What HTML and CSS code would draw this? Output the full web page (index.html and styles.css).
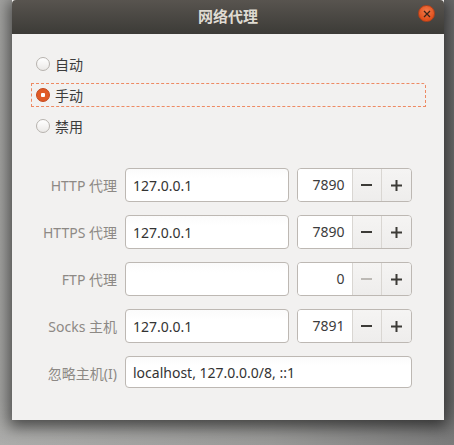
FILE: index.html
```html
<!DOCTYPE html>
<html lang="zh-CN">
<head>
  <meta charset="UTF-8" />
  <title>网络代理</title>
  <link rel="stylesheet" href="styles.css">
</head>
<body>

  <div class="desktop">
    <div class="dialog">
      <div class="titlebar">
        <span class="title">网络代理</span>
        <button class="close" aria-label="关闭">
          <svg width="8" height="8" viewBox="0 0 8 8"><path d="M1 1L7 7M7 1L1 7" stroke="#3a2418" stroke-width="1.3"/></svg>
        </button>
      </div>

      <div class="content">
        <div class="modes">
          <label class="mode"><span class="radio"></span>自动</label>
          <label class="mode focused"><span class="radio checked"></span>手动</label>
          <label class="mode"><span class="radio"></span>禁用</label>
        </div>

        <div class="proxy-grid">
          <span class="field-label">HTTP 代理</span>
          <input class="entry" type="text" value="127.0.0.1" />
          <div class="spin">
            <span class="spin-value">7890</span>
            <span class="spin-btn"><svg width="11" height="2"><rect width="11" height="2" fill="#3c3b37"/></svg></span>
            <span class="spin-btn"><svg width="11" height="11"><rect y="4.5" width="11" height="2" fill="#3c3b37"/><rect x="4.5" width="2" height="11" fill="#3c3b37"/></svg></span>
          </div>

          <span class="field-label">HTTPS 代理</span>
          <input class="entry" type="text" value="127.0.0.1" />
          <div class="spin">
            <span class="spin-value">7890</span>
            <span class="spin-btn"><svg width="11" height="2"><rect width="11" height="2" fill="#3c3b37"/></svg></span>
            <span class="spin-btn"><svg width="11" height="11"><rect y="4.5" width="11" height="2" fill="#3c3b37"/><rect x="4.5" width="2" height="11" fill="#3c3b37"/></svg></span>
          </div>

          <span class="field-label">FTP 代理</span>
          <input class="entry" type="text" value="" />
          <div class="spin">
            <span class="spin-value">0</span>
            <span class="spin-btn"><svg width="11" height="2"><rect width="11" height="2" fill="#bcb9b5"/></svg></span>
            <span class="spin-btn"><svg width="11" height="11"><rect y="4.5" width="11" height="2" fill="#3c3b37"/><rect x="4.5" width="2" height="11" fill="#3c3b37"/></svg></span>
          </div>

          <span class="field-label">Socks 主机</span>
          <input class="entry" type="text" value="127.0.0.1" />
          <div class="spin">
            <span class="spin-value">7891</span>
            <span class="spin-btn"><svg width="11" height="2"><rect width="11" height="2" fill="#3c3b37"/></svg></span>
            <span class="spin-btn"><svg width="11" height="11"><rect y="4.5" width="11" height="2" fill="#3c3b37"/><rect x="4.5" width="2" height="11" fill="#3c3b37"/></svg></span>
          </div>

          <span class="field-label">忽略主机(I)</span>
          <input class="entry entry-wide" type="text" value="localhost, 127.0.0.0/8, ::1" />
        </div>
      </div>
    </div>
  </div>

</body>
</html>
```

FILE: styles.css
```css
* {
  box-sizing: border-box;
}

html, body {
  margin: 0;
  height: 100%;
}

body {
  font-family: 'Noto Sans', 'Noto Sans CJK SC', sans-serif;
  font-size: 14px;
  background: linear-gradient(90deg, #a2a2a0 0%, #8c8c8a 60%, #6a6a6a 100%);
  overflow: hidden;
}

.desktop {
  height: 100%;
  padding-left: 12px;
  background: linear-gradient(180deg, rgba(0,0,0,0) 90%, rgba(255,255,255,0.12) 100%);
}

.dialog {
  width: 432px;
  height: 420px;
  background: #f2f1f0;
  box-shadow: 0 4px 14px 3px rgba(0,0,0,0.55);
  display: flex;
  flex-direction: column;
}

.titlebar {
  height: 34px;
  flex: none;
  position: relative;
  display: flex;
  align-items: center;
  justify-content: center;
  background: linear-gradient(180deg, #58544f, #3c3b37);
  border-top-left-radius: 4px;
  border-top-right-radius: 4px;
}

.title {
  color: #dfdbd2;
  font-size: 15px;
  font-weight: bold;
  margin-top: -3px;
}

.close {
  position: absolute;
  right: 9px;
  top: 5px;
  width: 17px;
  height: 17px;
  padding: 0;
  border-radius: 50%;
  border: 1px solid #b2401a;
  background: radial-gradient(circle at 50% 35%, #f27a4a, #e0501c 70%);
  display: flex;
  align-items: center;
  justify-content: center;
}

.content {
  padding: 18px 18px 0 19px;
}

.modes {
  display: flex;
  flex-direction: column;
  gap: 7px;
}

.mode {
  height: 24px;
  display: flex;
  align-items: center;
  gap: 5px;
  padding-left: 4px;
  color: #3c3c3c;
  border: 1px solid transparent;
}

.mode.focused {
  border: 1px dashed #ee8a63;
  border-top-right-radius: 3px;
}

.radio {
  width: 14px;
  height: 14px;
  border-radius: 50%;
  border: 1px solid #b7b3ae;
  background: linear-gradient(180deg, #ffffff, #ebe9e7);
}

.radio.checked {
  border-color: #c4461a;
  background: radial-gradient(circle, #ffffff 0 2px, #e05a26 2.5px 100%);
}

.proxy-grid {
  margin-top: 30px;
  display: grid;
  grid-template-columns: 86px 164px 115px;
  grid-auto-rows: 34px;
  column-gap: 8px;
  row-gap: 13px;
  align-items: center;
}

.field-label {
  text-align: right;
  color: #8d8985;
}

.entry {
  height: 34px;
  width: 100%;
  font: inherit;
  color: #333333;
  padding: 0 7px;
  border: 1px solid #bdb8b3;
  border-radius: 4px;
  background: linear-gradient(180deg, #fbfbfb, #ffffff 30%);
  outline: none;
}

.entry-wide {
  grid-column: 2 / 4;
  height: 32px;
  align-self: start;
}

.spin {
  height: 34px;
  display: flex;
  border: 1px solid #bdb8b3;
  border-radius: 4px;
  overflow: hidden;
}

.spin-value {
  width: 54px;
  background: #ffffff;
  color: #3c3c3c;
  text-align: right;
  padding-right: 7px;
  line-height: 32px;
}

.spin-btn {
  width: 30px;
  display: flex;
  align-items: center;
  justify-content: center;
  border-left: 1px solid #d9d6d2;
  background: linear-gradient(180deg, #f5f4f3, #eeedec);
}
```
